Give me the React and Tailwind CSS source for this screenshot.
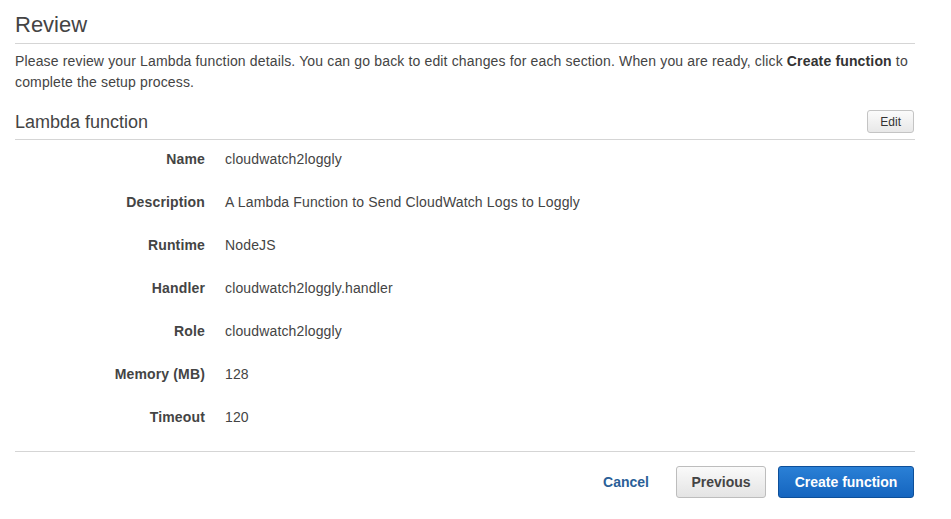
import React from 'react';

const rows = [
  ['Name', 'cloudwatch2loggly'],
  ['Description', 'A Lambda Function to Send CloudWatch Logs to Loggly'],
  ['Runtime', 'NodeJS'],
  ['Handler', 'cloudwatch2loggly.handler'],
  ['Role', 'cloudwatch2loggly'],
  ['Memory (MB)', '128'],
  ['Timeout', '120'],
];

const App = () => {
  return (
    <div className="min-h-screen bg-white text-[#444] font-['Liberation_Sans',Arial,sans-serif]">
      <div className="w-[900px] ml-[15px]">
        {/* Page header */}
        <h1 className="text-[22px] leading-[26px] pt-[12px] pb-[5px] border-b border-[#d5d5d5] text-[#444]">
          Review
        </h1>
        <p className="text-[14px] tracking-[0.15px] leading-[21px] mt-[7px]">
          Please review your Lambda function details. You can go back to edit changes for each section. When you are ready, click{' '}
          <b className="text-[#333]">Create function</b> to complete the setup process.
        </p>

        {/* Lambda function section */}
        <div className="flex items-center justify-between border-b border-[#d5d5d5] mt-[17px] pb-[6px]">
          <h2 className="text-[18px] leading-[22px]">Lambda function</h2>
          <button className="h-[23px] px-[12px] mr-[1px] text-[12px] text-[#333] rounded-[3px] border border-[#c4c4c4] bg-gradient-to-b from-[#fbfbfb] to-[#e8e8e8]">
            Edit
          </button>
        </div>

        <div className="flex flex-col gap-[26px] pt-[11px] pb-[25px] border-b border-[#d5d5d5]">
          {rows.map(([label, value]) => (
            <div key={label} className="flex items-center text-[14px] leading-[17px] tracking-[0.15px]">
              <div className="w-[190px] text-right font-bold text-[#444]">{label}</div>
              <div className="ml-[20px] text-[#444]">{value}</div>
            </div>
          ))}
        </div>

        {/* Actions */}
        <div className="flex items-center justify-end mt-[14px] mr-[1px]">
          <button className="text-[14px] font-bold text-[#2a5f98] mr-[27px]">Cancel</button>
          <button className="h-[32px] w-[90px] text-[14px] font-bold text-[#444] rounded-[3px] border border-[#bdbdbd] bg-gradient-to-b from-[#fafafa] to-[#e4e4e4]">
            Previous
          </button>
          <button className="h-[32px] w-[136px] ml-[12px] text-[14px] font-bold text-white rounded-[3px] border border-[#0d4f99] bg-gradient-to-b from-[#2a80d6] to-[#1565bf]">
            Create function
          </button>
        </div>
      </div>
    </div>
  );
};

export default App;
